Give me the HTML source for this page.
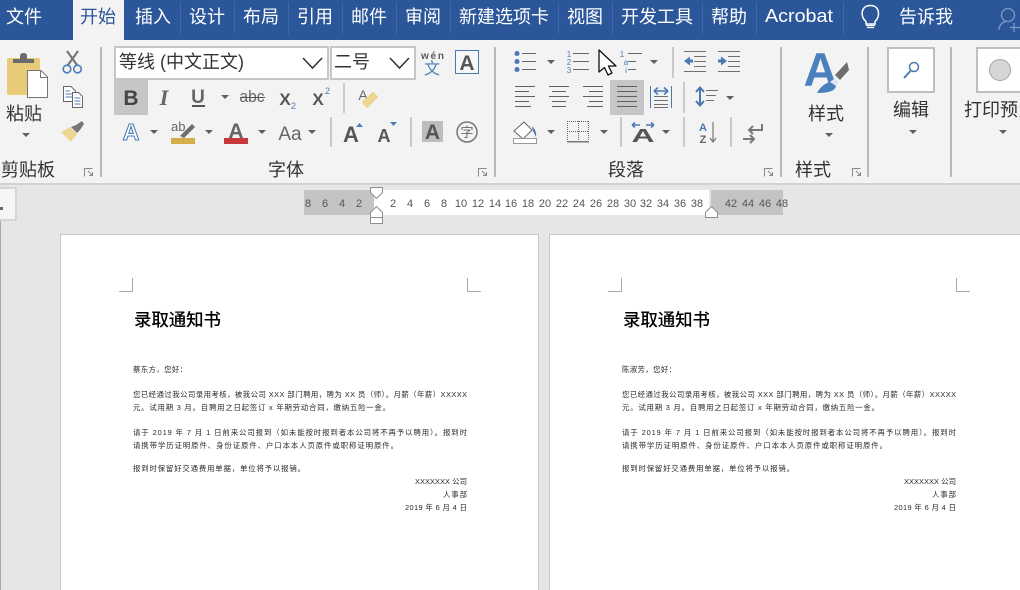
<!DOCTYPE html>
<html lang="zh"><head><meta charset="utf-8"><title>录取通知书</title>
<style>
html,body{margin:0;padding:0;background:#e6e6e6;overflow:hidden;width:1020px;height:590px}
svg{display:block}
text{font-family:"Liberation Sans","Noto Sans CJK SC",sans-serif}
.t{font-size:18px;fill:#fff}
.r{font-size:18px;fill:#333}
.n{font-size:11px;fill:#555;text-anchor:middle}
.b{font-size:7.4px;fill:#2a2a2a}
.h{font-size:17.5px;font-weight:500;fill:#000}
.body{filter:blur(.3px)}
.g{font-weight:700;fill:#5a5a5a}
</style></head><body>
<svg width="1020" height="590" viewBox="0 0 1020 590" xmlns="http://www.w3.org/2000/svg">
<!-- backgrounds -->
<rect width="1020" height="590" fill="#e6e6e6"/>
<rect width="1020" height="40" fill="#2b579a"/>
<rect y="40" width="1020" height="143" fill="#f3f3f3"/>
<rect y="183" width="1020" height="2" fill="#d2d2d2"/>
<rect x="73" width="51" height="41" fill="#f3f3f3"/>
<!-- tab separators -->
<path d="M180.5 2V34M234.5 2V34M288.5 2V34M342.5 2V34M396.5 2V34M450.5 2V34M558.5 2V34M612.5 2V34M702.5 2V34M756.5 2V34M843.5 2V34" stroke="#3e69a8" stroke-width="1"/>
<!-- tabs -->
<text class="t" x="6" y="23">文件</text>
<text class="t" x="80" y="23" style="fill:#2b579a">开始</text>
<text class="t" x="135" y="23">插入</text>
<text class="t" x="189" y="23">设计</text>
<text class="t" x="243" y="23">布局</text>
<text class="t" x="297" y="23">引用</text>
<text class="t" x="351" y="23">邮件</text>
<text class="t" x="405" y="23">审阅</text>
<text class="t" x="459" y="23">新建选项卡</text>
<text class="t" x="567" y="23">视图</text>
<text class="t" x="621" y="23">开发工具</text>
<text class="t" x="711" y="23">帮助</text>
<text class="t" x="765" y="22" textLength="68" lengthAdjust="spacingAndGlyphs">Acrobat</text>
<text class="t" x="899" y="23">告诉我</text>
<!-- bulb -->
<path d="M866 21.500C860 17 860.500 5.500 870.500 5.500C880 5.500 880.500 17 875 21.500V24H866Z" fill="none" stroke="#fff" stroke-width="1.500"/>
<path d="M866 25.500H875M867 27.500H874" stroke="#fff" stroke-width="1.200"/>
<!-- person -->
<circle cx="1008" cy="15" r="6.500" fill="none" stroke="#7f9ac2" stroke-width="1.300"/>
<path d="M999 30C999.500 24 1003 22 1006 21.500M1014 23V32M1010 27.500H1020" fill="none" stroke="#7f9ac2" stroke-width="1.300"/>
<!-- ribbon separators -->
<path d="M101 47V177M495 47V177M781 47V177M868 47V177M951 47V177" stroke="#b9b9b9" stroke-width="2"/>
<path d="M344 83V113M331 117V147M411 117V147M673 47V78M684 82V113M621 117V147M684 117V147M731 117V147" stroke="#cacaca" stroke-width="2"/>
<!-- clipboard -->
<rect x="7" y="58" width="33" height="37" rx="2" fill="#e8cb78"/>
<path d="M13 63V59H20V56Q20 53 23.500 53Q27 53 27 56V59H34V63Z" fill="#6b6b6b"/>
<path d="M27.500 70.500H41L47.500 77V97.500H27.500Z" fill="#fff" stroke="#777" stroke-width="1"/>
<path d="M40.500 70.500V77.500H47.500" fill="none" stroke="#777"/>
<text class="r" x="6" y="120">粘贴</text>
<!-- scissors -->
<path d="M67 51L77 65M78 51L68 65" stroke="#777" stroke-width="2.200"/>
<circle cx="67" cy="69" r="3.800" fill="none" stroke="#4a7ebb" stroke-width="1.600"/>
<circle cx="77.500" cy="69" r="3.800" fill="none" stroke="#4a7ebb" stroke-width="1.600"/>
<!-- copy -->
<path d="M63.500 86.500H71L75.500 91V101.500H63.500Z" fill="#fff" stroke="#666"/>
<path d="M72.500 92.500H78.500L82.500 96.500V107.500H72.500Z" fill="#fff" stroke="#666"/>
<path d="M65.500 91H70M65.500 94H72M65.500 97H72M74.500 98H80.500M74.500 101H80.500M74.500 104H80.500" stroke="#4a7ebb"/>
<!-- painter -->
<path d="M61 132L70 127L77 134L71 142Z" fill="#efd592"/>
<path d="M71 127L76 125L82 121L84 124L80 130L77 133Z" fill="#777"/>
<!-- arrows -->
<path d="M22 133h8l-4 4zM221 95h8l-4 4zM150 130h8l-4 4zM205 130h8l-4 4zM258 130h8l-4 4zM308 130h8l-4 4zM547 60h8l-4 4zM650 60h8l-4 4zM547 130h8l-4 4zM600 130h8l-4 4zM662 130h8l-4 4zM726 96h8l-4 4zM825 133h8l-4 4zM909 130h8l-4 4zM999 130h8l-4 4z" fill="#606060"/>
<!-- launchers -->
<g fill="none" stroke="#8a8a8a">
<path d="M92.500 168.500H84.500V176.500M88 171L92.500 175.500M92.500 172V175.500H89"/>
<path d="M486.500 168.500H478.500V176.500M482 171L486.500 175.500M486.500 172V175.500H483"/>
<path d="M772.500 168.500H764.500V176.500M768 171L772.500 175.500M772.500 172V175.500H769"/>
<path d="M860.500 168.500H852.500V176.500M856 171L860.500 175.500M860.500 172V175.500H857"/>
</g>
<!-- group labels -->
<text class="r" x="1" y="176">剪贴板</text>
<text class="r" x="268" y="176">字体</text>
<text class="r" x="608" y="176">段落</text>
<text class="r" x="795" y="176">样式</text>
<!-- font boxes -->
<rect x="115" y="47" width="213" height="32" fill="#fff" stroke="#c6c6c6" stroke-width="2"/>
<rect x="331" y="47" width="84" height="32" fill="#fff" stroke="#c6c6c6" stroke-width="2"/>
<text x="119" y="68" style="font-size:18px;fill:#333">等线 (中文正文)</text>
<text x="334" y="68" style="font-size:18px;fill:#333">二号</text>
<path d="M303 58L312.500 68L322 58M390 58L399.500 68L409 58" fill="none" stroke="#333" stroke-width="1.500"/>
<text class="g" x="421" y="59" style="font-size:10px" textLength="23">wén</text>
<text x="424" y="74" style="font-size:16px;fill:#4a7ebb">文</text>
<rect x="455.500" y="50.500" width="23" height="23" fill="#f7f7f7" stroke="#4a78b0"/>
<text x="467" y="70" text-anchor="middle" style="font-size:21px;font-weight:700;fill:#555">A</text>
<!-- row 2 -->
<rect x="114" y="80" width="34" height="35" fill="#c6c6c6"/>
<text x="131" y="105" text-anchor="middle" style="font-size:21px;font-weight:700;fill:#444">B</text>
<text x="164" y="105" text-anchor="middle" style="font-family:'Liberation Serif',serif;font-size:22px;font-style:italic;font-weight:700;fill:#666">I</text>
<text x="198" y="103" text-anchor="middle" style="font-size:19px;font-weight:700;fill:#666">U</text>
<rect x="192" y="105" width="13" height="2" fill="#555"/>
<text x="252" y="102" text-anchor="middle" textLength="25" lengthAdjust="spacingAndGlyphs" style="font-size:17px;fill:#666">abc</text>
<rect x="240" y="97" width="25" height="1" fill="#555"/>
<text x="285" y="105" text-anchor="middle" style="font-size:17px;font-weight:700;fill:#555">X</text>
<text x="291" y="109" style="font-size:9px;fill:#4a7ebb">2</text>
<text x="318" y="105" text-anchor="middle" style="font-size:17px;font-weight:700;fill:#555">X</text>
<text x="325" y="94" style="font-size:9px;fill:#4a7ebb">2</text>
<text x="363" y="100" text-anchor="middle" style="font-size:14px;fill:#666">A</text>
<path d="M362 102L373 92L378 97L367 108Z" fill="#efd592" stroke="#e0c98a" stroke-width=".5"/>
<!-- row 3 -->
<text x="131" y="140" text-anchor="middle" style="font-size:23px;font-weight:700;fill:#fff;stroke:#4a7ebb;stroke-width:1.100">A</text>
<text x="171" y="131" style="font-size:13px;fill:#666">ab</text>
<path d="M180 136L192 124L195 127L184 138Z" fill="#6e6e6e"/>
<rect x="171" y="138" width="24" height="6" fill="#d4ae4a"/>
<text x="236" y="138" text-anchor="middle" style="font-size:21px;font-weight:700;fill:#666">A</text>
<rect x="224" y="138" width="24" height="6" fill="#c8373a"/>
<text x="290" y="140" text-anchor="middle" style="font-size:19px;fill:#666">Aa</text>
<text x="351" y="142" text-anchor="middle" style="font-size:22px;font-weight:700;fill:#555">A</text>
<path d="M356 127h7l-3.500-4z" fill="#4a7ebb"/>
<text x="384" y="142" text-anchor="middle" style="font-size:18px;font-weight:700;fill:#555">A</text>
<path d="M390 122h7l-3.500 4z" fill="#4a7ebb"/>
<rect x="422" y="121" width="21" height="21" fill="#bdbdbd"/>
<text x="432.500" y="139" text-anchor="middle" style="font-size:21px;font-weight:700;fill:#555">A</text>
<circle cx="467" cy="132" r="10" fill="none" stroke="#777" stroke-width="1.500"/>
<text x="467" y="137" text-anchor="middle" style="font-size:13px;fill:#666">字</text>
<!-- lists -->
<g fill="#4a78b0"><circle cx="517" cy="53.500" r="2.500"/><circle cx="517" cy="61.500" r="2.500"/><circle cx="517" cy="69.500" r="2.500"/></g>
<path d="M522 53.500H536M522 61.500H536M522 69.500H536M573 53.500H589M573 61.500H589M573 69.500H589M628 53.500H642M628 61.500H636M628 69.500H636" stroke="#666" stroke-width="1"/>
<g style="font-size:8px;fill:#4a78b0" text-anchor="middle">
<text x="569" y="57">1</text><text x="569" y="65">2</text><text x="569" y="73">3</text>
<text x="622" y="57">1</text><text x="626" y="65">a</text><text x="626" y="73">i</text></g>
<path d="M599 50V72L604.500 67.500L608 75L612 73L608.500 66L616 66Z" fill="#fff" stroke="#111" stroke-width="1.300" stroke-linejoin="round"/>
<!-- indents -->
<path d="M684 51.500H706M694 56.500H706M694 61.500H706M694 66.500H706M684 71.500H706M718 51.500H740M728 56.500H740M728 61.500H740M728 66.500H740M718 71.500H740" stroke="#707070"/>
<path d="M684 61L690 56.500V59.500H693V62.500H690V65.500ZM727 61L721 56.500V59.500H718V62.500H721V65.500Z" fill="#4a78b0"/>
<!-- align -->
<rect x="610" y="80" width="34" height="35" fill="#c6c6c6"/>
<path d="M515 86.500H535M515 91.500H529M515 96.500H535M515 101.500H529M515 106.500H531M549 86.500H569M552 91.500H566M549 96.500H569M552 101.500H566M552 106.500H566M583 86.500H603M589 91.500H603M583 96.500H603M589 101.500H603M587 106.500H603M617 86.500H637M617 91.500H637M617 96.500H637M617 101.500H637M617 106.500H637" stroke="#606060"/>
<path d="M650.500 86V108M671.500 86V108" stroke="#4a78b0"/>
<path d="M654 91L658 87.500M654 91L658 94.500M654 91H668M668 91L664 87.500M668 91L664 94.500" stroke="#4a78b0" stroke-width="1.500" fill="none"/>
<path d="M654 96.500H668M654 100.500H668M654 104.500H668M654 107.500H668" stroke="#707070"/>
<!-- line spacing -->
<path d="M700 88V105M696 92L700 87.500L704 92M696 101L700 105.500L704 101" fill="none" stroke="#4a78b0" stroke-width="2"/>
<path d="M706 90.500H718M706 95.500H716M706 100.500H714" stroke="#707070"/>
<!-- shading -->
<path d="M514 131L524 122L532 130L523 139Z" fill="#fff" stroke="#666"/>
<path d="M532 126Q537 131 536 137L533 131Z" fill="#4a78b0"/>
<rect x="513.500" y="138.500" width="23" height="5" fill="#fff" stroke="#999"/>
<!-- borders -->
<path d="M567 121.500H589M567 131.500H589M567.500 121V141M578.500 121V141M588.500 121V141" fill="none" stroke="#666" stroke-dasharray="1 1"/>
<rect x="567" y="141" width="22" height="1.500" fill="#777"/>
<!-- char widen -->
<text x="643" y="142" text-anchor="middle" style="font-size:18px;font-weight:700;fill:#555" textLength="23" lengthAdjust="spacingAndGlyphs">A</text>
<path d="M632 125H640M632 125L635 122.500M632 125L635 127.500M654 125H646M654 125L651 122.500M654 125L651 127.500" stroke="#4a78b0" stroke-width="1.500" fill="none"/>
<!-- sort -->
<text x="703" y="131" text-anchor="middle" style="font-size:11px;font-weight:700;fill:#4a78b0">A</text>
<text x="703" y="143" text-anchor="middle" style="font-size:11px;font-weight:700;fill:#666">Z</text>
<path d="M713 122V142M710 138L713 142L716 138" fill="none" stroke="#777" stroke-width="1.200"/>
<!-- return -->
<path d="M762 124V130H749M753 126L749 130L753 134" fill="none" stroke="#777" stroke-width="2"/>
<path d="M743 139H754M750 135L754 139L750 143" fill="none" stroke="#777" stroke-width="2"/>
<!-- styles -->
<text x="820.500" y="86" text-anchor="middle" style="font-size:47px;fill:#4a80bb;font-weight:700">A</text>
<path d="M847 62L849 70L840 80L835 75Z" fill="#6e6e6e"/>
<path d="M817 93Q822 84 830 82L836 86Q835 93 817 93Z" fill="#4a80bb"/>
<path d="M830 82L835 78L838 82L836 86Z" fill="#dbe6f2"/>
<text class="r" x="808" y="120">样式</text>
<!-- editing -->
<rect x="888" y="48" width="46" height="44" fill="#fff" stroke="#bfbfbf" stroke-width="2"/>
<circle cx="914" cy="67" r="4.500" fill="none" stroke="#4a78b0" stroke-width="1.500"/>
<path d="M910.500 71L904 78" stroke="#4a78b0" stroke-width="2"/>
<text class="r" x="893" y="116">编辑</text>
<rect x="977" y="48" width="50" height="44" fill="#fff" stroke="#bfbfbf" stroke-width="2"/>
<circle cx="1000" cy="70" r="10.500" fill="#d6d6d9" stroke="#a4a4a4"/>
<text class="r" x="964" y="116">打印预览</text>
<!-- ruler -->
<rect x="0" y="187" width="1" height="403" fill="#aaa"/>
<rect x="-2" y="188" width="18" height="32" fill="#f5f5f5" stroke="#d5d5d8" stroke-width="2"/>
<rect x="0" y="207" width="3" height="3" fill="#666"/>
<rect x="304" y="190" width="70" height="25" fill="#c4c4c4"/>
<rect x="374" y="190" width="335" height="25" fill="#fff"/>
<rect x="711" y="190" width="72" height="25" fill="#c4c4c4"/>
<g class="n">
<text class="n" x="308" y="207">8</text><text class="n" x="325" y="207">6</text><text class="n" x="342" y="207">4</text><text class="n" x="359" y="207">2</text>
<text class="n" x="393" y="207">2</text><text class="n" x="410" y="207">4</text><text class="n" x="427" y="207">6</text><text class="n" x="444" y="207">8</text>
<text class="n" x="461" y="207">10</text><text class="n" x="478" y="207">12</text><text class="n" x="495" y="207">14</text><text class="n" x="511" y="207">16</text>
<text class="n" x="528" y="207">18</text><text class="n" x="545" y="207">20</text><text class="n" x="562" y="207">22</text><text class="n" x="579" y="207">24</text>
<text class="n" x="596" y="207">26</text><text class="n" x="613" y="207">28</text><text class="n" x="630" y="207">30</text><text class="n" x="646" y="207">32</text>
<text class="n" x="663" y="207">34</text><text class="n" x="680" y="207">36</text><text class="n" x="697" y="207">38</text>
<text class="n" x="731" y="207">42</text><text class="n" x="748" y="207">44</text><text class="n" x="765" y="207">46</text><text class="n" x="782" y="207">48</text>
</g>
<path d="M370.500 187.500H382.500V192.500L376.500 198.500L370.500 192.500Z" fill="#fff" stroke="#8f8f8f"/>
<path d="M376.500 206.500L382.500 212.500V223.500H370.500V212.500ZM370.500 217.500H382.500" fill="#fff" stroke="#8f8f8f"/>
<path d="M711.500 206.500L717.500 212.500V217.500H705.500V212.500Z" fill="#fff" stroke="#8f8f8f"/>
<!-- pages -->
<rect x="60.500" y="234.500" width="478" height="370" fill="#fff" stroke="#c6c6c6"/>
<rect x="549.500" y="234.500" width="490" height="370" fill="#fff" stroke="#c6c6c6"/>
<path d="M132.500 278V291.500H119M467.500 278V291.500H481M621.500 278V291.500H608M956.500 278V291.500H970" fill="none" stroke="#aaa"/>
<!-- page 1 -->
<text class="h" x="134" y="326" textLength="87">录取通知书</text>
<g class="body">
<text class="b" x="133" y="372" textLength="54">蔡东方，您好：</text>
<text class="b" x="133" y="397" textLength="334">您已经通过我公司录用考核，被我公司 XXX 部门聘用，聘为 XX 员（师）。月薪（年薪）XXXXX</text>
<text class="b" x="133" y="410" textLength="257">元。试用期 3 月。自聘用之日起签订 x 年期劳动合同，缴纳五险一金。</text>
<text class="b" x="133" y="435" textLength="334">请于 2019 年 7 月 1 日前来公司报到（如未能按时报到者本公司将不再予以聘用）。报到时</text>
<text class="b" x="133" y="448" textLength="265">请携带学历证明原件、身份证原件、户口本本人页原件或职称证明原件。</text>
<text class="b" x="133" y="471" textLength="172">报到时保留好交通费用单据，单位将予以报销。</text>
<text class="b" x="415" y="484" textLength="52">XXXXXXX 公司</text>
<text class="b" x="443" y="497" textLength="24">人事部</text>
<text class="b" x="405" y="510" textLength="62">2019 年 6 月 4 日</text>
</g>
<!-- page 2 -->
<text class="h" x="623" y="326" textLength="87">录取通知书</text>
<g class="body">
<text class="b" x="622" y="372" textLength="54">陈淑芳，您好：</text>
<text class="b" x="622" y="397" textLength="334">您已经通过我公司录用考核，被我公司 XXX 部门聘用，聘为 XX 员（师）。月薪（年薪）XXXXX</text>
<text class="b" x="622" y="410" textLength="257">元。试用期 3 月。自聘用之日起签订 x 年期劳动合同，缴纳五险一金。</text>
<text class="b" x="622" y="435" textLength="334">请于 2019 年 7 月 1 日前来公司报到（如未能按时报到者本公司将不再予以聘用）。报到时</text>
<text class="b" x="622" y="448" textLength="265">请携带学历证明原件、身份证原件、户口本本人页原件或职称证明原件。</text>
<text class="b" x="622" y="471" textLength="172">报到时保留好交通费用单据，单位将予以报销。</text>
<text class="b" x="904" y="484" textLength="52">XXXXXXX 公司</text>
<text class="b" x="932" y="497" textLength="24">人事部</text>
<text class="b" x="894" y="510" textLength="62">2019 年 6 月 4 日</text>
</g>
</svg>
</body></html>
